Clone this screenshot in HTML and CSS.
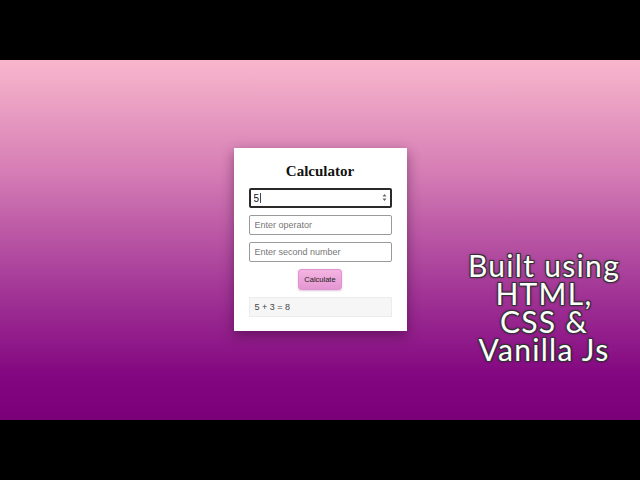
FILE: index.html
```html
<!DOCTYPE html>
<html>
<head>
<meta charset="utf-8">
<link rel="stylesheet" href="styles.css">
</head>
<body>
<div class="frame">
  <div class="stage">
    <div class="card">
      <h1 class="title">Calculator</h1>
      <div class="field focused">
        <input class="input input-focus" type="text" value="5">
        <span class="caret"></span>
        <span class="spin"><svg width="5" height="9" viewBox="0 0 5 9"><path d="M2.5 1 L4.5 3.5 H0.5 Z M2.5 8 L4.5 5.5 H0.5 Z" fill="#666"/></svg></span>
      </div>
      <input class="input" type="text" placeholder="Enter operator">
      <input class="input" type="text" placeholder="Enter second number">
      <div class="btn-row"><button class="btn">Calculate</button></div>
      <div class="result">5 + 3 = 8</div>
    </div>
    <div class="caption">Built using<br>HTML,<br>CSS &amp;<br>Vanilla Js</div>
  </div>
</div>
</body>
</html>
```
FILE: styles.css
```css
html, body {
  margin: 0;
  padding: 0;
  background: #000;
}
.frame {
  width: 640px;
  height: 480px;
  padding-top: 60px;
  box-sizing: border-box;
}
.stage {
  position: relative;
  height: 360px;
  background: linear-gradient(to bottom, #f8b7cc 0%, #d77fb6 30%, #a53a98 62%, #820680 88%, #7a0078 100%);
  display: flex;
  align-items: center;
  justify-content: center;
}
.card {
  width: 173px;
  height: 183px;
  box-sizing: border-box;
  background: #fff;
  padding: 14px 15px 14px;
  box-shadow: 0 4px 12px rgba(40, 0, 40, 0.45);
  display: flex;
  flex-direction: column;
  gap: 7px;
  margin-top: -1px;
}
.title {
  margin: 0 0 1px;
  font-family: "Liberation Serif", serif;
  font-weight: bold;
  font-size: 15px;
  line-height: 18px;
  text-align: center;
  color: #111;
}
.field {
  position: relative;
}
.input {
  display: block;
  width: 143px;
  height: 20px;
  box-sizing: border-box;
  margin: 0;
  border: 1px solid #9a9a9a;
  border-radius: 2px;
  padding: 0 5px;
  font-family: "Liberation Sans", sans-serif;
  font-size: 9px;
  color: #111;
  background: #fff;
  outline: none;
}
.input::placeholder {
  color: #777;
}
.input-focus {
  border: 2px solid #2a2a2a;
  padding-left: 3px;
  font-size: 10px;
}
.caret {
  position: absolute;
  left: 11px;
  top: 5px;
  width: 1px;
  height: 10px;
  background: #444;
}
.spin {
  position: absolute;
  right: 5px;
  top: 5px;
  line-height: 0;
}
.btn-row {
  display: flex;
  justify-content: center;
}
.btn {
  width: 44px;
  height: 21px;
  margin: 0;
  padding: 0;
  border: 1px solid #dc95cf;
  border-radius: 3px;
  background: linear-gradient(to bottom, #f4b4e0, #e596d3);
  box-shadow: 0 1px 2px rgba(120, 40, 110, 0.25);
  font-family: "Liberation Sans", sans-serif;
  font-size: 7.5px;
  color: #222;
}
.result {
  height: 20px;
  box-sizing: border-box;
  border: 1px solid #ececec;
  background: #f6f6f6;
  padding: 0 5px;
  font-family: "Liberation Sans", sans-serif;
  font-size: 9px;
  line-height: 18px;
  color: #444;
}
.caption {
  position: absolute;
  left: 444px;
  top: 191px;
  width: 200px;
  text-align: center;
  font-family: "Lato", sans-serif;
  font-weight: 400;
  font-size: 30px;
  letter-spacing: 1.3px;
  line-height: 28px;
  color: #fff;
  text-shadow: -1px -1px 0 #333, 1px -1px 0 #333, -1px 1px 0 #333, 1px 1px 0 #333, 0 0 3px #000;
}
```
